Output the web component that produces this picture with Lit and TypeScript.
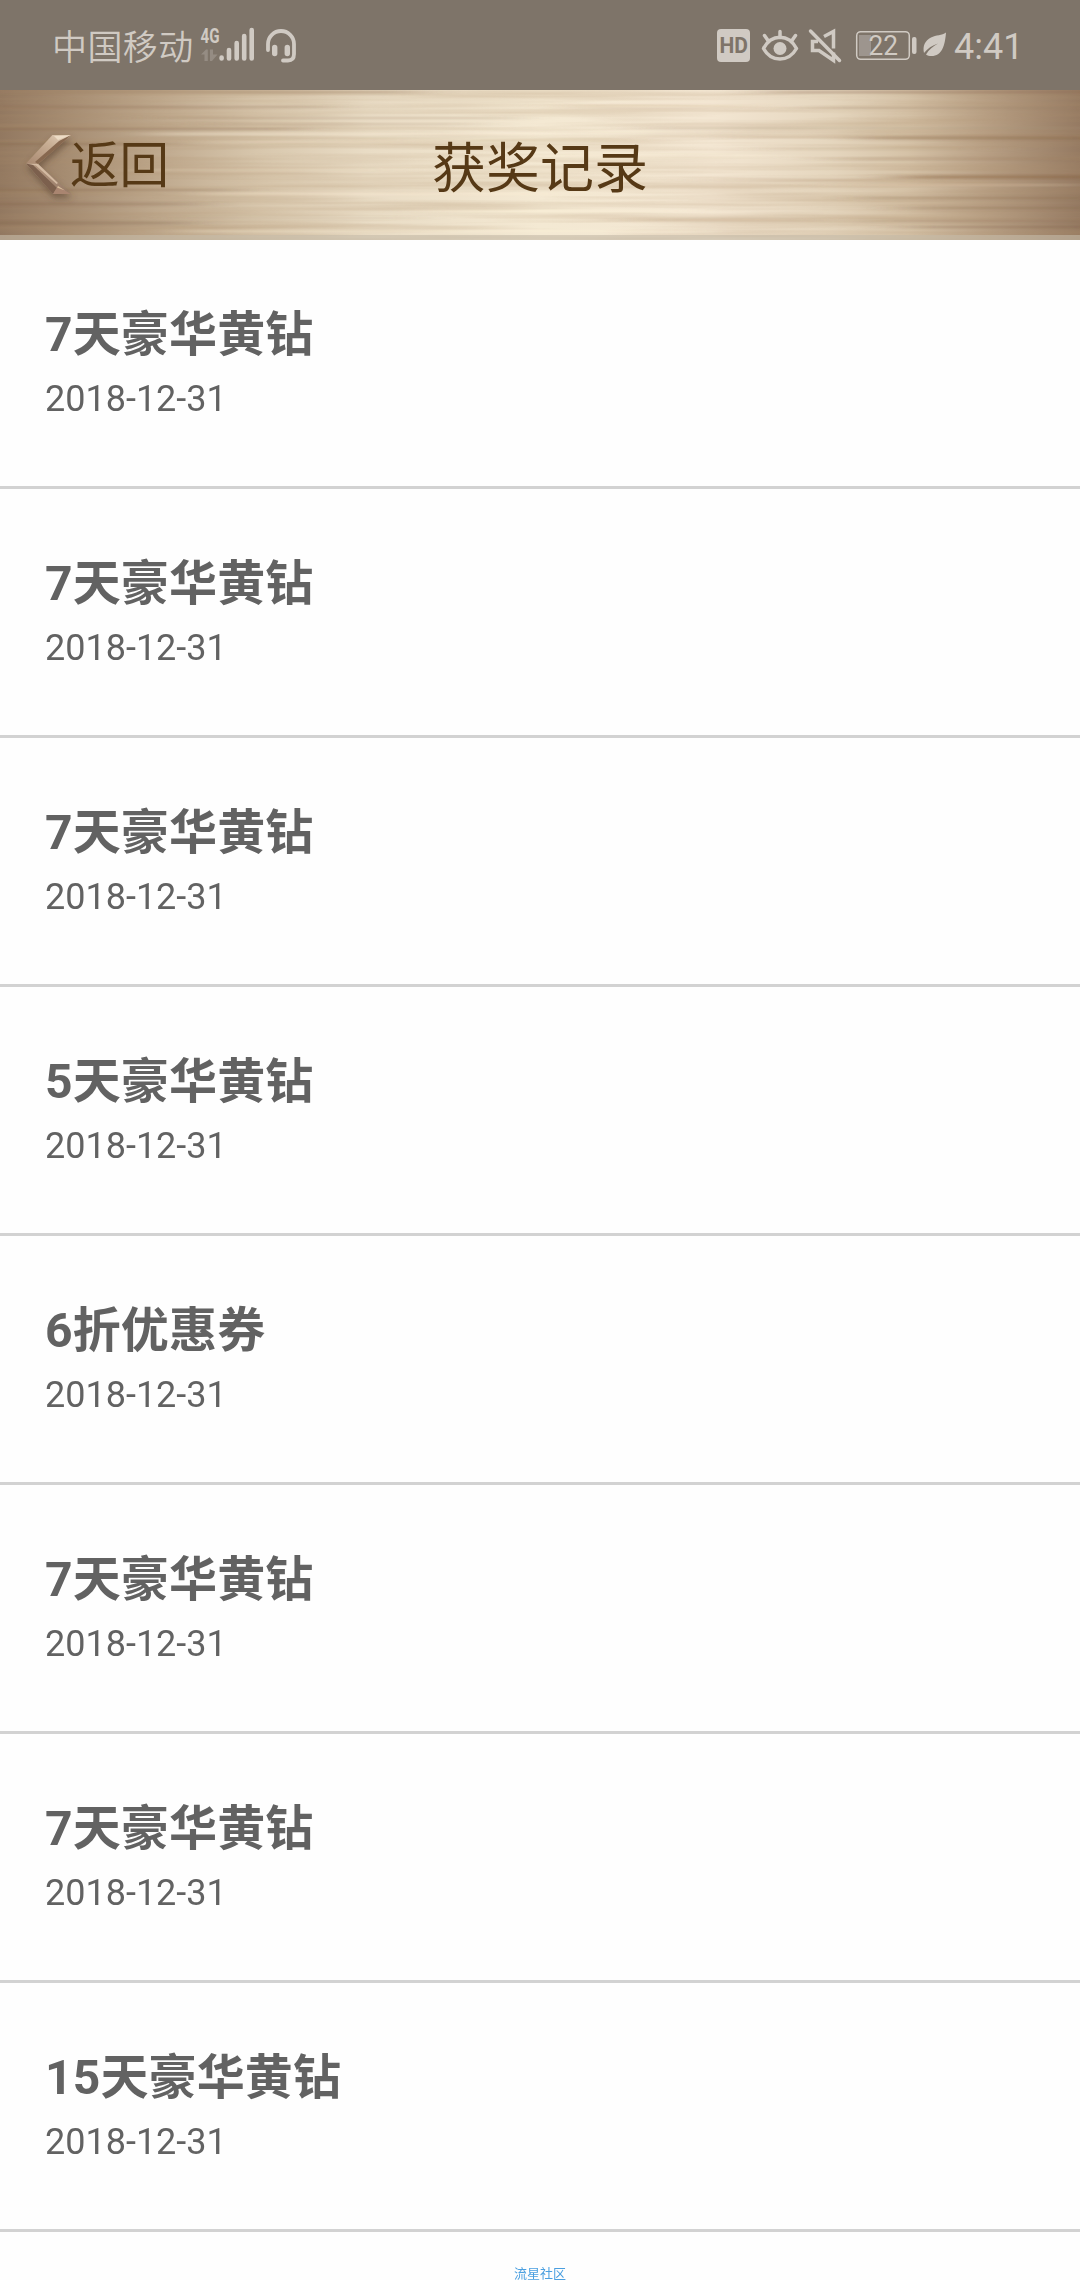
import { LitElement, html, css, svg } from "lit";
import { customElement, property } from "lit/decorators.js";

const FONT = css`Roboto, "Noto Sans CJK SC", sans-serif`;

@customElement("status-bar")
class StatusBar extends LitElement {
  static styles = css`
    :host { display: flex; align-items: flex-start; height: 90px; background: #7e7469; color: #d0cac3; font-family: ${FONT}; box-sizing: border-box; padding: 0 57px 0 52px; }
    .carrier { font-size: 35px; line-height: 97px; font-weight: 350; height: 90px; width: 140px; white-space: nowrap; letter-spacing: .4px; }
    .left { width: 110px; height: 90px; flex: none; margin-left: 6px; }
    .spacer { flex: 1; }
    .right { width: 240px; height: 90px; flex: none; }
    .time { font-size: 36px; line-height: 94px; height: 90px; width: 69px; white-space: nowrap; }
    .tiny { font: 700 19.500px Roboto, sans-serif; }
    .hd { font: 700 22px Roboto, sans-serif; }
    .pct { font: 400 27px Roboto, sans-serif; }
  `;
  render() {
    return html`
      <span class="carrier">中国移动</span>
      <svg class="left" viewBox="198 0 110 90" fill="#d0cac3">
        <text class="tiny" x="200.500" y="43" textLength="19" lengthAdjust="spacingAndGlyphs">4G</text>
        <path fill="#958c83" d="M201 54.500l5-5h1.800v11.500h-3.300v-6.500zM210 49.500h3v5h4.500l-5.500 6.500h-2z" />
        <g stroke="#d0cac3" stroke-width="4.600" stroke-linecap="round">
          <path d="M221.600 57.500v1M229 50v8.500M236.700 43v15.500M244.200 36v22.500M251.700 30v28.500" />
        </g>
        <g fill="none" stroke="#d0cac3" stroke-width="3.800" stroke-linecap="round">
          <path d="M268 50v-6a13 13 0 0 1 26 0v10c0 4-2 6.500-6 6.500h-5" />
          <path stroke-width="5.400" d="M274.700 47.500v6M287.300 47.500v6" />
        </g>
      </svg>
      <div class="spacer"></div>
      <svg class="right" viewBox="714 0 240 90" fill="#d0cac3">
        <rect x="717" y="29" width="33" height="33" rx="4" />
        <text class="hd" x="719.500" y="53" fill="#7e7469" textLength="28.500" lengthAdjust="spacingAndGlyphs">HD</text>
        <g fill="none" stroke="#d0cac3" stroke-width="3.500" stroke-linecap="round" stroke-linejoin="round">
          <path d="M763.500 48.500c8-15 25-15 33 0c-8 14-25 14-33 0zM780 31.500v6M764.500 35.500l3.500 5M795.500 35.500l-3.500 5" />
          <path d="M810.500 31l29 29.500" />
          <path stroke-linecap="butt" stroke-linejoin="miter" d="M824 36.500l9.500-5v17M818 41.500h-5.500v9h6.500l14.500 10v-8" />
        </g>
        <circle cx="780" cy="48.500" r="6.500" />
        <rect x="856.700" y="31.700" width="52.600" height="27.600" rx="4" fill="none" stroke="#d0cac3" stroke-width="1.500" />
        <rect x="859" y="35" width="12" height="21" fill="#9d958e" />
        <text class="pct" x="868.500" y="55" textLength="29.500" lengthAdjust="spacingAndGlyphs">22</text>
        <rect x="912" y="37" width="4.500" height="17" rx="2" />
        <path d="M946 32.500c-1 13-4 23.500-14.500 23.500c-2.500 0-4-.5-5.500-1.500c3-5 7-8 12-11c-6 2-10.500 5-14 9.500c-1.500-7 1-12.500 7-15.500c5-2.500 11-2 15-5z" />
      </svg>
      <span class="time">4:41</span>
    `;
  }
}

// Streaks of the brushed-wood plank: [x1, x2, y, thickness, colour, opacity]
const STREAKS: [number, number, number, number, string, number][] = [
  [-40, 420, 2, 3, "#9b7f64", .45], [760, 1110, 2, 3, "#8a6a4e", .4],
  [-40, 330, 17, 2, "#8b6d52", .4], [800, 1110, 18, 2, "#9d8064", .4],
  [150, 520, 28, 2, "#a88e70", .4], [200, 480, 34, 2, "#b39c80", .4],
  [-40, 300, 39, 2, "#7f6148", .4], [640, 1110, 38, 2, "#b0967a", .35],
  [860, 1110, 48, 3, "#876647", .5], [150, 560, 44, 2, "#fff3de", .5],
  [720, 860, 47, 2, "#c2a98c", .4],
  [760, 1000, 59, 2, "#b59b7c", .35], [-40, 170, 54, 2, "#7f6148", .35],
  [820, 1110, 69, 2, "#9b7e60", .3], [900, 1110, 87, 4, "#8a6344", .5],
  [700, 920, 90, 2, "#b9a184", .35], [830, 1080, 95, 2, "#e0cdb0", .45],
  [200, 430, 52, 2, "#f2e3ca", .5], [140, 400, 80, 2, "#e6d3b5", .4],
  [-40, 240, 100, 2, "#836449", .35], [200, 560, 104, 2, "#fff0d5", .5],
  [860, 1110, 108, 3, "#8c6c50", .35], [-40, 200, 114, 3, "#80624a", .35],
  [900, 1110, 118, 3, "#8a6b50", .35], [640, 830, 130, 2, "#bda283", .45],
  [160, 420, 128, 1, "#b99f7f", .5], [860, 1110, 131, 1, "#7e6048", .4],
  [900, 1110, 137, 2, "#80614a", .4], [-40, 190, 133, 3, "#7d5f48", .4],
  [180, 700, 141, 3, "#fff3da", .35], [460, 720, 42, 2, "#fff6e4", .5],
  [560, 760, 16, 2, "#dcc6a5", .45], [330, 640, 50, 2, "#d4bd9e", .4],
  [420, 700, 121, 2, "#fff2da", .55], [520, 780, 66, 2, "#fff4df", .55],
];

@customElement("wood-nav")
class WoodNav extends LitElement {
  static styles = css`
    :host { display: grid; grid-template-columns: 1fr; height: 150px; color: #563916; font-family: ${FONT}; }
    .wood, .bar { grid-area: 1 / 1; width: 1080px; height: 150px; display: block; }
    .bar { display: grid; grid-template-columns: 1fr auto 1fr; z-index: 1; }
    .back { display: flex; align-items: flex-start; padding-left: 20px; }
    .chev { width: 50px; height: 150px; flex: none; }
    .label { font-size: 49.500px; line-height: 153px; height: 150px; }
    .title { font-size: 54px; font-weight: 400; line-height: 159px; margin: 0; height: 150px; }
  `;
  render() {
    return html`
      <svg class="wood" viewBox="0 0 1080 150">
        <defs>
          <linearGradient id="base">
            <stop offset="0" stop-color="#927860" /><stop offset=".06" stop-color="#a58c72" />
            <stop offset=".14" stop-color="#bda78c" /><stop offset=".24" stop-color="#d8c7ad" />
            <stop offset=".34" stop-color="#e9dcc5" /><stop offset=".5" stop-color="#f4e9d3" />
            <stop offset=".66" stop-color="#f3e6d2" /><stop offset=".77" stop-color="#e5d6be" />
            <stop offset=".84" stop-color="#d5c2a7" /><stop offset=".91" stop-color="#b9a186" />
            <stop offset="1" stop-color="#957a62" />
          </linearGradient>
          <filter id="grain" x="0" y="0" width="100%" height="100%" color-interpolation-filters="sRGB">
            <feTurbulence type="fractalNoise" baseFrequency=".003 .12" numOctaves="3" seed="8" />
            <feColorMatrix values="0 0 0 0 .68  0 0 0 0 .56  0 0 0 0 .42  1.600 0 0 0 -.55" />
          </filter>
          <filter id="soft" x="-5%" y="-10%" width="110%" height="120%"><feGaussianBlur stdDeviation="22 .9" /></filter>
        </defs>
        <rect width="1080" height="150" fill="url(#base)" />
        <rect width="1080" height="150" filter="url(#grain)" opacity=".4" />
        <g filter="url(#soft)" opacity=".85">
          ${STREAKS.map(([a, b, y, h, c, o]) => svg`<rect x=${a} y=${y - h / 2} width=${b - a} height=${h} fill=${c} opacity=${o} />`)}
        </g>
        <rect y="145" width="1080" height="5" fill="#c4bba8" opacity=".6" />
      </svg>
      <div class="bar">
        <div class="back">
          <svg class="chev" viewBox="20 90 50 150" overflow="visible">
            <defs>
              <filter id="drop" x="-30%" y="-20%" width="180%" height="160%"><feDropShadow dx="1" dy="4" stdDeviation="3" flood-color="#5a4433" flood-opacity=".6" /></filter>
              <linearGradient id="up" x1="0" y1="1" x2="1" y2="0"><stop offset="0" stop-color="#a88870" /><stop offset=".6" stop-color="#c8ae94" /><stop offset="1" stop-color="#e6d3bd" /></linearGradient>
              <linearGradient id="dn" x1="0" y1="0" x2="1" y2="1"><stop offset="0" stop-color="#b99b82" /><stop offset="1" stop-color="#957966" /></linearGradient>
            </defs>
            <g filter="url(#drop)">
              <path fill="url(#up)" d="M26 163.500L52.500 135H71L38 164z" />
              <path fill="#87684f" d="M38 164l20-17 13-12l-12 6L35 162z" />
              <path fill="url(#dn)" d="M26 163.500L38 164l33 30H53z" />
              <path fill="#7c604e" d="M26 163.500L53 194l4-6L32 164z" />
              <path fill="#d3baa2" d="M26 163.500l12 .5 20 19-1.500 1L36 165.500z" />
              <path fill="#eddcc5" d="M54 136h14l-10 4z" />
              <path fill="#a98570" d="M53 194l4.500-7.500L71 194z" />
              <path fill="#dcc09e" d="M57 187.500l1-1.500l7 4.500z" />
            </g>
          </svg>
          <span class="label">返回</span>
        </div>
        <h1 class="title">获奖记录</h1>
        <span></span>
      </div>
    `;
  }
}

@customElement("prize-row")
class PrizeRow extends LitElement {
  @property() name = "";
  @property() date = "";
  static styles = css`
    :host { display: flex; flex-direction: column; box-sizing: border-box; height: 249px; padding: 59px 45px 0; border-bottom: 3px solid #d2d2d2; color: #626262; font-family: ${FONT}; }
    .name { font-size: 48px; font-weight: 700; line-height: 72px; height: 71px; letter-spacing: .15px; }
    .date { font-size: 36px; line-height: 58px; height: 58px; }
  `;
  render() {
    return html`<div class="name">${this.name}</div><div class="date">${this.date}</div>`;
  }
}

const PRIZES = ["7天豪华黄钻", "7天豪华黄钻", "7天豪华黄钻", "5天豪华黄钻", "6折优惠券", "7天豪华黄钻", "7天豪华黄钻", "15天豪华黄钻"];

@customElement("app-root")
class AppRoot extends LitElement {
  static styles = css`
    :host { display: flex; flex-direction: column; width: 1080px; height: 2280px; overflow: hidden; background: #fefefe; }
    .foot { height: 48px; display: flex; justify-content: center; box-sizing: border-box; padding-top: 35px; font-family: ${FONT}; font-size: 13px; line-height: 13px; color: #4a9fe0; }
  `;
  render() {
    return html`
      <status-bar></status-bar>
      <wood-nav></wood-nav>
      ${PRIZES.map((p) => html`<prize-row .name=${p} .date=${"2018-12-31"}></prize-row>`)}
      <div class="foot">流星社区</div>
    `;
  }
}
